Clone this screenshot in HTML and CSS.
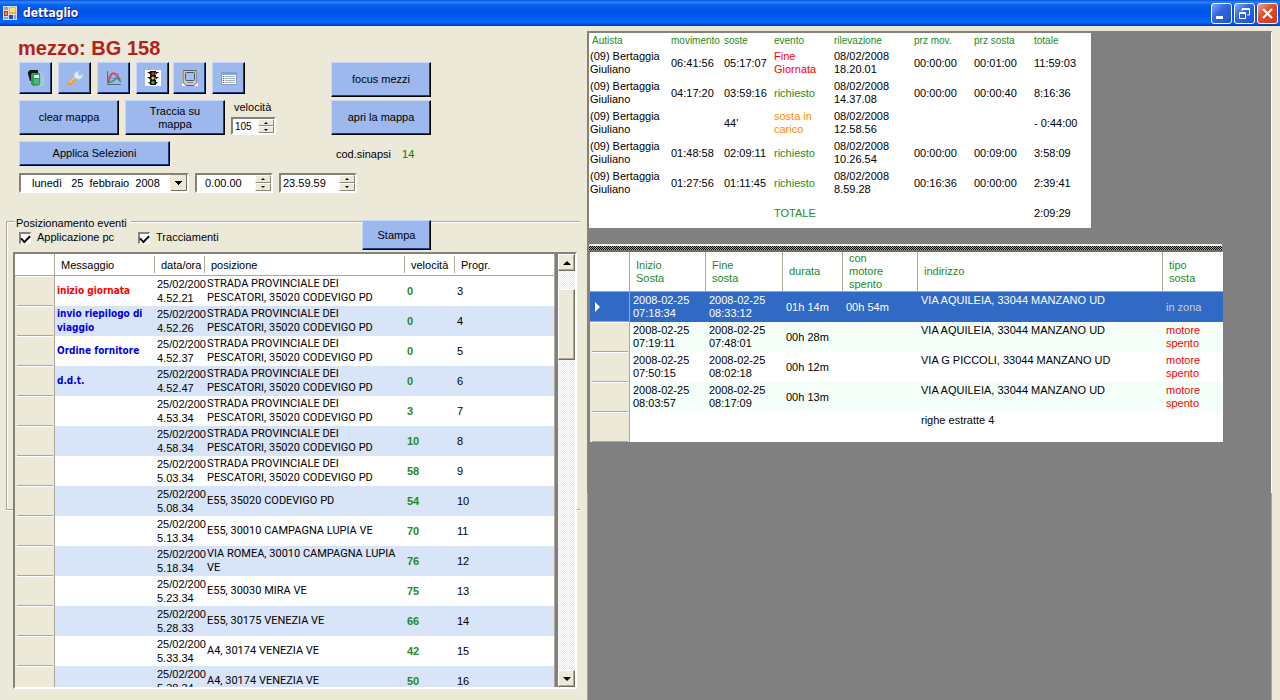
FILE: index.html
```html
<!DOCTYPE html>
<html lang="it">
<head>
<meta charset="utf-8">
<title>dettaglio</title>
<link rel="stylesheet" href="styles.css">
</head>
<body>
<header class="titlebar">
  <svg class="app-icon" width="14" height="14" viewBox="0 0 14 14"><rect width="14" height="14" fill="#d8dce8"/><rect x="1" y="5" width="4" height="5" fill="#d03018"/><rect x="2" y="6" width="2" height="3" fill="#f08060"/><rect x="6" y="1" width="7" height="7" fill="#f0b818"/><rect x="7" y="2" width="5" height="4" fill="#ffe070"/><rect x="6" y="9" width="4" height="4" fill="#2050c8"/><path d="M1 1h4v3H1zM11 9h2v4h-2zM1 11h4v2H1z" fill="#98a0b4"/></svg>
  <h1 class="caption">dettaglio</h1>
  <div class="window-buttons">
    <button class="win-btn" aria-label="Riduci a icona"><svg width="19" height="19" viewBox="0 0 19 19"><path d="M4 12h7v3H4z" fill="#fff"/></svg></button>
    <button class="win-btn" aria-label="Ripristina"><svg width="19" height="19" viewBox="0 0 19 19" fill="none" stroke="#fff"><path d="M7 7V4.500h7.500V11H12M7 5.500h7"/><path d="M4.500 8.500h6v6h-6zM4 9.500h7"/></svg></button>
    <button class="win-btn win-close" aria-label="Chiudi"><svg width="19" height="19" viewBox="0 0 19 19"><path d="M5 5l9 9M14 5l-9 9" stroke="#fff" stroke-width="2.200"/></svg></button>
  </div>
</header>
<main class="window">
  <section class="left-pane">
    <h2 class="vehicle">mezzo: BG 158</h2>
    <div class="controls">
      <div class="control-col">
        <div class="toolbar">
          <div class="tool-group">
            <button class="btn tool" aria-label="Carburante"><svg width="18" height="18" viewBox="0 0 18 18"><path d="M1 3l2-2h8v3H5v8H3L1 5z" fill="#101810"/><path d="M4 5l2-1h7v12l-7 1-2-2z" fill="#2c9c58"/><path d="M7 6h5v3H7z" fill="#dff4e4"/><path d="M7 10h5v5H7z" fill="#48b878"/><path d="M13 4l3 3v7c0 3-2 3-3 1" fill="none" stroke="#a8dcc0" stroke-width="1.400"/></svg></button>
            <button class="btn tool" aria-label="Manutenzione"><svg width="18" height="18" viewBox="0 0 18 18"><path d="M2 14l7-6 2 2-6 6c-2 1-4-1-3-2z" fill="#f49a20"/><path d="M3 13l6-5 1 1-6 5z" fill="#ffc860"/><path d="M8 8c0-3 1-5 5-6l-1 3 2 2 3-2c0 4-3 6-6 5z" fill="#e4eaf4" stroke="#b8c4dc" stroke-width=".6"/></svg></button>
            <button class="btn tool" aria-label="Grafico"><svg width="18" height="18" viewBox="0 0 18 18" fill="none"><path d="M2.500 2v13.500H16" stroke="#5068a0"/><path d="M2 15l3-2M2 11l2-1" stroke="#8090c0"/><path d="M3 14C6 1 10 2 15 11" stroke="#d84058" stroke-width="1.800"/><path d="M3 14c4-1 7-3 9-5l4 4" stroke="#389870" stroke-width="1.600"/><path d="M3 7l6 3 5-6" stroke="#6088d0"/></svg></button>
            <button class="btn tool" aria-label="Semaforo"><svg width="16" height="16" viewBox="0 0 16 16"><path fill="#fff" d="M0 0h16v16H0z"/><path d="M5 1h6v14H5zM2 2h3l1 3zM14 2h-3l-1 3zM2 7h3l1 3zM14 7h-3l-1 3zM3 12h2v2zM13 12h-2v2z" fill="#101010"/><circle cx="8" cy="3.500" r="1.600" fill="#e02020"/><circle cx="8" cy="8" r="1.600" fill="#f0d020"/><circle cx="8" cy="12.500" r="1.600" fill="#28b858"/></svg></button>
          </div>
          <div class="tool-group">
            <button class="btn tool" aria-label="Terminale"><svg width="16" height="16" viewBox="0 0 16 16"><path fill="#fff" d="M0 0h16v16H0z"/><path d="M1 .5h14v12l-3 3H4l-3-3z" fill="#c4cad2" stroke="#59616b"/><rect x="3.500" y="2.500" width="9" height="8" rx="1" fill="#a4c0ec" stroke="#485868"/><path d="M5 12.500h6" stroke="#808890"/></svg></button>
            <button class="btn tool" aria-label="Elenco"><svg width="16" height="16" viewBox="0 0 16 16"><rect x=".5" y="2.500" width="15" height="12" fill="#fff" stroke="#88a0c8"/><path d="M1 3h14v2H1z" fill="#78a8e8"/><path d="M2 6.500h1M2 8.500h1M2 10.500h1M2 12.500h1" stroke="#506888"/><path d="M4 6.500h10M4 8.500h10M4 10.500h10M4 12.500h10" stroke="#a8b0bc"/></svg></button>
          </div>
        </div>
        <div class="map-row">
          <button class="btn large">clear mappa</button>
          <button class="btn large two-line">Traccia su mappa</button>
          <div class="speed">
            <label for="speed">velocità</label>
            <div class="spinner"><input id="speed" type="text" value="105"><span class="steps"><button class="step up" aria-label="Aumenta"></button><button class="step down" aria-label="Diminuisci"></button></span></div>
          </div>
        </div>
        <button class="btn apply">Applica Selezioni</button>
      </div>
      <div class="side-col">
        <button class="btn large">focus mezzi</button>
        <button class="btn large">apri la mappa</button>
        <p class="code">cod.sinapsi <span class="code-value">14</span></p>
      </div>
    </div>
    <div class="date-row">
      <select class="date" aria-label="Data"><option>lunedì &nbsp; 25 &nbsp;febbraio &nbsp;2008</option></select>
      <div class="spinner time"><input type="text" value="0.00.00" aria-label="Dalle"><span class="steps"><button class="step up" aria-label="Aumenta"></button><button class="step down" aria-label="Diminuisci"></button></span></div>
      <div class="spinner time late"><input type="text" value="23.59.59" aria-label="Alle"><span class="steps"><button class="step up" aria-label="Aumenta"></button><button class="step down" aria-label="Diminuisci"></button></span></div>
    </div>
    <section class="group" aria-labelledby="group-title">
      <div class="group-head">
        <div>
          <h3 class="group-title" id="group-title">Posizionamento eventi</h3>
          <div class="checks">
            <label class="check"><input type="checkbox" checked>Applicazione pc</label>
            <label class="check"><input type="checkbox" checked>Tracciamenti</label>
          </div>
        </div>
        <button class="btn print">Stampa</button>
      </div>
      <div class="grid-frame">
        <div class="grid-view">
          <table class="grid events">
            <colgroup><col class="c40"><col class="c100"><col class="c50"><col class="c200"><col class="c50"><col></colgroup>
            <thead><tr><th></th><th><span>Messaggio</span></th><th><span>data/ora</span></th><th><span>posizione</span></th><th><span>velocità</span></th><th><span>Progr.</span></th></tr></thead>
            <tbody>
              <tr><th></th><td class="msg start">inizio giornata</td><td>25/02/200<br>4.52.21</td><td class="place">STRADA PROVINCIALE DEI<br>PESCATORI, 35020 CODEVIGO PD</td><td class="vel">0</td><td>3</td></tr>
              <tr><th></th><td class="msg">invio riepilogo di<br>viaggio</td><td>25/02/200<br>4.52.26</td><td class="place">STRADA PROVINCIALE DEI<br>PESCATORI, 35020 CODEVIGO PD</td><td class="vel">0</td><td>4</td></tr>
              <tr><th></th><td class="msg">Ordine fornitore</td><td>25/02/200<br>4.52.37</td><td class="place">STRADA PROVINCIALE DEI<br>PESCATORI, 35020 CODEVIGO PD</td><td class="vel">0</td><td>5</td></tr>
              <tr><th></th><td class="msg">d.d.t.</td><td>25/02/200<br>4.52.47</td><td class="place">STRADA PROVINCIALE DEI<br>PESCATORI, 35020 CODEVIGO PD</td><td class="vel">0</td><td>6</td></tr>
              <tr><th></th><td></td><td>25/02/200<br>4.53.34</td><td class="place">STRADA PROVINCIALE DEI<br>PESCATORI, 35020 CODEVIGO PD</td><td class="vel">3</td><td>7</td></tr>
              <tr><th></th><td></td><td>25/02/200<br>4.58.34</td><td class="place">STRADA PROVINCIALE DEI<br>PESCATORI, 35020 CODEVIGO PD</td><td class="vel">10</td><td>8</td></tr>
              <tr><th></th><td></td><td>25/02/200<br>5.03.34</td><td class="place">STRADA PROVINCIALE DEI<br>PESCATORI, 35020 CODEVIGO PD</td><td class="vel">58</td><td>9</td></tr>
              <tr><th></th><td></td><td>25/02/200<br>5.08.34</td><td class="place">E55, 35020 CODEVIGO PD</td><td class="vel">54</td><td>10</td></tr>
              <tr><th></th><td></td><td>25/02/200<br>5.13.34</td><td class="place">E55, 30010 CAMPAGNA LUPIA VE</td><td class="vel">70</td><td>11</td></tr>
              <tr><th></th><td></td><td>25/02/200<br>5.18.34</td><td class="place">VIA ROMEA, 30010 CAMPAGNA LUPIA<br>VE</td><td class="vel">76</td><td>12</td></tr>
              <tr><th></th><td></td><td>25/02/200<br>5.23.34</td><td class="place">E55, 30030 MIRA VE</td><td class="vel">75</td><td>13</td></tr>
              <tr><th></th><td></td><td>25/02/200<br>5.28.33</td><td class="place">E55, 30175 VENEZIA VE</td><td class="vel">66</td><td>14</td></tr>
              <tr><th></th><td></td><td>25/02/200<br>5.33.34</td><td class="place">A4, 30174 VENEZIA VE</td><td class="vel">42</td><td>15</td></tr>
              <tr><th></th><td></td><td>25/02/200<br>5.38.34</td><td class="place">A4, 30174 VENEZIA VE</td><td class="vel">50</td><td>16</td></tr>
            </tbody>
          </table>
        </div>
        <div class="scrollbar">
          <button class="scroll-btn up" aria-label="Scorri su"></button>
          <div class="track"><div class="thumb"></div></div>
          <button class="scroll-btn down" aria-label="Scorri giù"></button>
        </div>
      </div>
    </section>
  </section>
  <section class="right-pane">
    <div class="upper">
      <table class="drivers">
        <colgroup><col class="d-driver"><col class="d-mov"><col class="d-stop"><col class="c60"><col class="d-time"><col class="c60"><col class="c60"><col></colgroup>
        <thead><tr><th>Autista</th><th>movimento</th><th>soste</th><th>evento</th><th>rilevazione</th><th>prz mov.</th><th>prz sosta</th><th>totale</th></tr></thead>
        <tbody>
          <tr><td>(09) Bertaggia<br>Giuliano</td><td>06:41:56</td><td>05:17:07</td><td class="red">Fine<br>Giornata</td><td>08/02/2008<br>18.20.01</td><td>00:00:00</td><td>00:01:00</td><td>11:59:03</td></tr>
          <tr><td>(09) Bertaggia<br>Giuliano</td><td>04:17:20</td><td>03:59:16</td><td class="green">richiesto</td><td>08/02/2008<br>14.37.08</td><td>00:00:00</td><td>00:00:40</td><td>8:16:36</td></tr>
          <tr><td>(09) Bertaggia<br>Giuliano</td><td></td><td>44'</td><td class="orange">sosta in<br>carico</td><td>08/02/2008<br>12.58.56</td><td></td><td></td><td>- 0:44:00</td></tr>
          <tr><td>(09) Bertaggia<br>Giuliano</td><td>01:48:58</td><td>02:09:11</td><td class="green">richiesto</td><td>08/02/2008<br>10.26.54</td><td>00:00:00</td><td>00:09:00</td><td>3:58:09</td></tr>
          <tr><td>(09) Bertaggia<br>Giuliano</td><td>01:27:56</td><td>01:11:45</td><td class="green">richiesto</td><td>08/02/2008<br>8.59.28</td><td>00:16:36</td><td>00:00:00</td><td>2:39:41</td></tr>
          <tr><td></td><td></td><td></td><td class="green">TOTALE</td><td></td><td></td><td></td><td>2:09:29</td></tr>
        </tbody>
      </table>
      <div class="splitter"></div>
      <table class="grid stops">
        <colgroup><col class="c40"><col class="s-from"><col class="s-to"><col class="c60"><col class="s-engine"><col class="s-addr"><col></colgroup>
        <thead><tr><th></th><th><span>Inizio<br>Sosta</span></th><th><span>Fine<br>sosta</span></th><th><span>durata</span></th><th><span>con<br>motore<br>spento</span></th><th><span>indirizzo</span></th><th><span>tipo<br>sosta</span></th></tr></thead>
        <tbody>
          <tr class="selected"><th><i class="pointer"></i></th><td>2008-02-25<br>07:18:34</td><td>2008-02-25<br>08:33:12</td><td>01h 14m</td><td>00h 54m</td><td class="addr">VIA AQUILEIA, 33044 MANZANO UD</td><td class="zone">in zona</td></tr>
          <tr><th></th><td>2008-02-25<br>07:19:11</td><td>2008-02-25<br>07:48:01</td><td>00h 28m</td><td></td><td class="addr">VIA AQUILEIA, 33044 MANZANO UD</td><td class="red">motore<br>spento</td></tr>
          <tr><th></th><td>2008-02-25<br>07:50:15</td><td>2008-02-25<br>08:02:18</td><td>00h 12m</td><td></td><td class="addr">VIA G PICCOLI, 33044 MANZANO UD</td><td class="red">motore<br>spento</td></tr>
          <tr><th></th><td>2008-02-25<br>08:03:57</td><td>2008-02-25<br>08:17:09</td><td>00h 13m</td><td></td><td class="addr">VIA AQUILEIA, 33044 MANZANO UD</td><td class="red">motore<br>spento</td></tr>
          <tr><th></th><td></td><td></td><td></td><td></td><td class="addr">righe estratte 4</td><td></td></tr>
        </tbody>
      </table>
    </div>
    <div class="lower"></div>
  </section>
</main>
</body>
</html>
```
FILE: styles.css
```css
* { box-sizing: border-box; }
html, body { height: 100%; }
body {
  margin: 0;
  display: flex;
  flex-direction: column;
  overflow: hidden;
  background: #ece9d8;
  color: #000;
  font: 11px/13px "Liberation Sans", Arial, sans-serif;
}
h1, h2, h3, p { margin: 0; font-size: 11px; font-weight: normal; }
button, input, select { font: inherit; color: inherit; }

.titlebar {
  flex: none;
  height: 26px;
  display: flex;
  align-items: center;
  gap: 6px;
  padding: 0 2px 0 3px;
  background: linear-gradient(#0a50d8 0, #2a86f8 2px, #0860ec 5px, #0054e3 10px, #0058ee 16px, #0468fc 22px, #0450d8 24px, #0038b8 26px);
}
.caption { flex: 1; color: #fff; font: bold 12px/16px "DejaVu Sans Condensed", "Noto Sans", sans-serif; text-shadow: 1px 1px #0f1089; }
.window-buttons { display: flex; gap: 2px; }
.win-btn {
  width: 21px;
  height: 21px;
  padding: 0;
  border: 1px solid #fff;
  border-radius: 3px;
  background: linear-gradient(135deg, #88a8f4, #3468e0 40%, #1c50d0);
}
.win-btn svg { display: block; }
.win-close { background: linear-gradient(135deg, #f0a088, #e05030 40%, #c83818); }

.window { flex: 1; min-height: 0; display: flex; padding: 5px 8px 0 0; }
.left-pane { flex: 0 0 587px; min-height: 0; display: flex; flex-direction: column; padding: 5px 7px 11px 6px; }
.vehicle { padding: 0 12px; color: #b22222; font: bold 20px/24px "Liberation Sans", Arial, sans-serif; }

.controls { display: flex; gap: 55px; padding: 2px 13px 0; }
.control-col { display: flex; flex-direction: column; align-items: flex-start; gap: 6px; }
.toolbar { display: flex; gap: 4px; }
.tool-group { display: flex; gap: 6px; }
.map-row { display: flex; gap: 6px; }
.side-col { display: flex; flex-direction: column; gap: 3px; }
.btn {
  padding: 0;
  border: 1px solid;
  border-color: #c4d8fc #000 #000 #c4d8fc;
  box-shadow: inset -1px -1px #1c3c84;
  background: #9db8ec;
}
.tool { width: 33px; height: 32px; display: flex; align-items: center; justify-content: center; }
.large { width: 100px; height: 35px; }
.two-line { padding: 0 20px; }
.apply { width: 151px; height: 25px; }
.print { width: 69px; height: 30px; }
.code { padding: 10px 5px 0; white-space: nowrap; }
.code-value { padding-left: 8px; color: #008000; }

.speed { display: flex; flex-direction: column; gap: 3px; }
.speed label { padding: 1px 3px 0; }
.spinner {
  display: flex;
  width: 45px;
  height: 18px;
  border: 2px solid;
  border-color: #85827a #fff #fff #85827a;
  background: #fff;
}
.spinner input { flex: 1; min-width: 0; padding: 0 2px; border: 0; outline: 0; background: none; font-size: 10px; }
.steps { width: 16px; display: flex; flex-direction: column; }
.step {
  flex: 1;
  display: flex;
  align-items: center;
  justify-content: center;
  padding: 0;
  border: 1px solid;
  border-color: #fff #8c897c #8c897c #fff;
  background: #ece9d8;
}
.step::before { content: ""; border: 2px solid transparent; }
.step.up::before { border-top-width: 0; border-bottom-color: #000; }
.step.down::before { border-bottom-width: 0; border-top-color: #000; }

.date-row { display: flex; gap: 6px; padding: 7px 13px 0; }
.date {
  width: 170px;
  height: 20px;
  padding: 0 18px 0 11px;
  appearance: none;
  border: 2px solid;
  border-radius: 0;
  border-color: #85827a #fff #fff #85827a;
  background:
    linear-gradient(#000, #000) right 5px top 6px / 7px 1px no-repeat,
    linear-gradient(#000, #000) right 6px top 7px / 5px 1px no-repeat,
    linear-gradient(#000, #000) right 7px top 8px / 3px 1px no-repeat,
    linear-gradient(#000, #000) right 8px top 9px / 1px 1px no-repeat,
    linear-gradient(#ece9d8, #ece9d8) right 1px top 0 / 16px 15px no-repeat,
    linear-gradient(#716f64, #716f64) right / 16px 16px no-repeat,
    #fff;
}
.spinner.time { width: 78px; height: 20px; }
.time input { padding: 0 8px; font-size: 11px; }
.late input { padding: 0 2px; }

.group { position: relative; flex: 1; min-height: 0; display: flex; flex-direction: column; margin-top: 22px; }
.group::before {
  content: "";
  position: absolute;
  inset: 6px 0 auto;
  height: 287px;
  border: 1px solid #aca899;
  border-right: 0;
  box-shadow: inset 1px 1px #fff, 0 1px #fff;
}
.group-head, .grid-frame { position: relative; }
.group-head { display: flex; justify-content: space-between; align-items: flex-end; padding: 2px 149px 0 9px; }
.group-title { width: 116px; padding: 0 0 1px 1px; background: #ece9d8; white-space: nowrap; }
.checks { display: flex; gap: 24px; padding: 0 4px 6px; }
.check { display: flex; align-items: center; gap: 6px; }
.check input {
  appearance: none;
  width: 12px;
  height: 12px;
  margin: 0;
  border: 2px solid;
  border-width: 2px 1px 1px 2px;
  border-color: #85827a #fff #fff #85827a;
  background: #fff;
  display: grid;
  place-items: center;
}
.check input:checked::before { content: ""; width: 7px; height: 4px; border: solid #000; border-width: 0 0 2px 2px; transform: rotate(-45deg); }

.grid-frame {
  flex: 1;
  min-height: 0;
  display: flex;
  margin: 2px 3px 0 7px;
  border: 2px solid;
  border-color: #85827a #fff #fff #85827a;
}
.grid-view { flex: 1; overflow: hidden; background: #fff; border-right: 1px solid #aca899; }
.scrollbar { flex: none; width: 20px; display: flex; flex-direction: column; border-left: 3px solid #808080; background: #ece9d8; }
.scroll-btn, .thumb { border: 1px solid; border-color: #fff #716f64 #716f64 #fff; box-shadow: inset -1px -1px #aca899; background: #ece9d8; }
.scroll-btn { width: 17px; height: 17px; padding: 0; display: flex; align-items: center; justify-content: center; }
.scroll-btn::before { content: ""; border: 4px solid transparent; }
.scroll-btn.up::before { border-top-width: 0; border-bottom-color: #000; }
.scroll-btn.down::before { border-bottom-width: 0; border-top-color: #000; }
.track { flex: 1; padding-top: 18px; background: repeating-conic-gradient(#fff 0 25%, #ece9d8 0 50%) 0 0 / 2px 2px; }
.thumb { height: 71px; }

table { border-collapse: separate; border-spacing: 0; table-layout: fixed; background: #fff; }
th, td { padding: 0 2px; text-align: left; font-weight: normal; white-space: nowrap; }
tbody tr { height: 30px; }
.c40 { width: 40px; }
.c50 { width: 50px; }
.c60 { width: 60px; }
.c100 { width: 100px; }
.c200 { width: 200px; }
.grid thead th { padding: 2px 0; border-bottom: 1px solid #aca899; }
.grid thead th span { display: flex; align-items: center; height: 100%; padding: 0 6px; border-right: 1px solid #aca899; }
.grid thead th:last-child span { border-right: 0; }
.grid thead th:first-child { border-right: 1px solid #aca899; }
.grid tbody th {
  border-right: 1px solid #aca899;
  background:
    linear-gradient(#aca899, #aca899) 2px 100% / 36px 1px no-repeat,
    linear-gradient(#fff, #fff) 2px 0 / 36px 1px no-repeat,
    #ece9d8;
}
.events { width: 100%; line-height: 14px; }
.events thead th { height: 22px; }
.events tbody tr:nth-child(even) { background: #d8e4f8; }
.place { font-family: Roboto, "Liberation Sans", sans-serif; }
.msg { color: #0000e6; font: bold 10px/14px "DejaVu Sans Condensed", "Noto Sans", sans-serif; }
.msg.start { color: #f00; }
.vel { color: #228b22; font-weight: bold; }

.right-pane { flex: 1; min-width: 0; display: flex; flex-direction: column; }
.upper {
  flex: 0 0 462px;
  border: 2px solid;
  border-color: #85827a #fff #85827a #85827a;
  border-right-width: 1px;
  border-bottom: 0;
  background: #808080;
}
.lower { flex: 1; border-left: 1px solid #aca899; border-right: 1px solid #aca899; background: #808080; }
.drivers { width: 502px; }
.drivers th { height: 15px; padding: 0 3px; color: #228b22; font-size: 10px; line-height: 14px; }
.drivers th:nth-child(n + 2) { padding: 0; }
.drivers td:first-child { padding-left: 1px; }
.drivers td:nth-child(n + 2) { padding: 0; }
.d-driver { width: 82px; }
.d-mov { width: 53px; }
.d-stop { width: 50px; }
.d-time { width: 80px; }
.splitter {
  width: 633px;
  height: 8px;
  margin-top: 16px;
  border-top: 2px solid #f4f4f0;
  border-bottom: 2px solid #716f64;
  background: repeating-conic-gradient(#000 0 25%, #a0a0a0 0 50%) 0 0 / 2px 2px;
}
.stops { width: 634px; border-left: 1px solid #85827a; }
.grid.stops thead th { height: 40px; padding: 0; color: #228b22; }
.s-from { width: 76px; }
.s-to { width: 77px; }
.s-engine { width: 75px; }
.s-addr { width: 245px; }
.stops td { padding-left: 3px; }
.stops tbody tr:nth-child(even) { background: #f4fffa; }
.stops tbody tr.selected { background: #316ac5; color: #fff; }
.stops tbody .selected th { background: #316ac5; border-bottom: 1px solid #aca899; }
.stops .addr { padding-top: 2px; vertical-align: top; }
.zone { color: #c8ccd8; }
.pointer { display: block; width: 0; margin-left: 3px; border: 5px solid transparent; border-left-color: #fff; border-right-width: 0; }
.red { color: #f00; }
.green { color: #228b22; }
.orange { color: #ff8c00; }
```
